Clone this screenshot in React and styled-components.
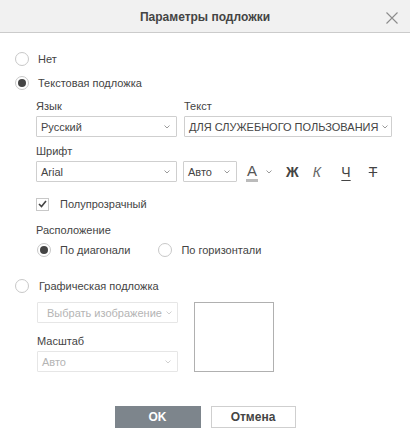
import React from 'react';
import styled, { createGlobalStyle } from 'styled-components';

const GlobalStyle = createGlobalStyle`
  body {
    margin: 0;
    background: #fff;
    font-family: "Liberation Sans", Arial, sans-serif;
    font-size: 11px;
    color: #444;
  }
`;

const Dialog = styled.div`
  width: 410px;
  height: 438px;
  background: #fff;
  display: flex;
  flex-direction: column;
`;

const Header = styled.div`
  position: relative;
  height: 32px;
  border-bottom: 1px solid #cbcbcb;
  background: #f1f1f1;
  display: flex;
  align-items: center;
  justify-content: center;
`;

const Title = styled.div`
  font-size: 12px;
  font-weight: bold;
  color: #444;
  padding-top: 1px;
`;

const Close = styled.div`
  position: absolute;
  right: 12px;
  top: 12px;
  width: 12px;
  height: 12px;
  display: flex;
`;

const Body = styled.div`
  display: flex;
  flex-direction: column;
  padding: 19px 0 0 15px;
`;

const OptionRow = styled.label`
  display: flex;
  align-items: center;
  height: 14px;
  line-height: 14px;
  gap: ${p => p.$gap || 9}px;
  margin-top: ${p => p.$mt || 0}px;
  color: #444;
`;

const Radio = styled.span`
  box-sizing: border-box;
  width: 14px;
  height: 14px;
  border-radius: 50%;
  border: 1px solid #c8c8c8;
  background: #fff;
  display: flex;
  align-items: center;
  justify-content: center;
  flex: none;
  &::after {
    content: '';
    width: 8px;
    height: 8px;
    border-radius: 50%;
    background: ${p => (p.$checked ? '#444' : 'transparent')};
  }
`;

const Section = styled.div`
  display: flex;
  flex-direction: column;
  padding-left: 21px;
  margin-top: ${p => p.$mt || 0}px;
`;

const FieldRow = styled.div`
  display: flex;
  align-items: flex-end;
  gap: ${p => p.$gap || 7}px;
  margin-top: ${p => p.$mt || 0}px;
`;

const Field = styled.div`
  display: flex;
  flex-direction: column;
`;

const Label = styled.div`
  height: 14px;
  line-height: 14px;
  margin-bottom: 3px;
  margin-top: ${p => p.$mt || 0}px;
  color: #444;
`;

const Select = styled.div`
  box-sizing: border-box;
  width: ${p => p.$w}px;
  height: 21px;
  border: 1px solid ${p => (p.$disabled ? '#e6e6e6' : '#cfcfcf')};
  border-radius: 1px;
  background: #fff;
  display: flex;
  align-items: center;
  justify-content: space-between;
  padding: 0 6px 0 ${p => p.$pl || 4}px;
  color: ${p => (p.$disabled ? '#b4b4b4' : '#444')};
  white-space: nowrap;
  overflow: hidden;
`;

const Chevron = ({ color = '#9a9a9a' }) => (
  <svg width="6" height="4" viewBox="0 0 6 4" style={{ flex: 'none', marginLeft: 4 }}>
    <path d="M0.5 0.5 L3 3 L5.5 0.5" fill="none" stroke={color} strokeWidth="1" />
  </svg>
);

const Tools = styled.div`
  display: flex;
  align-items: center;
  height: 21px;
  margin-left: 3px;
`;

const ColorBtn = styled.div`
  display: flex;
  align-items: center;
  gap: 4px;
  margin-right: 14px;
`;

const ColorLetter = styled.span`
  position: relative;
  font-size: 15px;
  line-height: 15px;
  color: #555;
  width: 12px;
  text-align: center;
  padding-bottom: 3px;
  &::after {
    content: '';
    position: absolute;
    left: 0;
    bottom: -1px;
    width: 12px;
    height: 3px;
    background: #bbb;
  }
`;

const StyleBtn = styled.span`
  width: 12px;
  margin-right: ${p => p.$mr || 17}px;
  text-align: center;
  font-size: ${p => p.$size || 14}px;
  line-height: 16px;
  color: ${p => p.$color || '#444'};
  font-weight: ${p => (p.$bold ? 'bold' : 'normal')};
  font-style: ${p => (p.$italic ? 'italic' : 'normal')};
  text-decoration: ${p => p.$deco || 'none'};
  text-underline-offset: 3px;
  text-decoration-thickness: 1px;
`;

const Checkbox = styled.span`
  box-sizing: border-box;
  width: 13px;
  height: 13px;
  border: 1px solid #c8c8c8;
  background: #fff;
  display: flex;
  align-items: center;
  justify-content: center;
  flex: none;
`;

const GraphicArea = styled.div`
  display: flex;
  gap: 16px;
  padding-left: 22px;
  margin-top: 9px;
`;

const Preview = styled.div`
  box-sizing: border-box;
  width: 80px;
  height: 70px;
  border: 1px solid #b0b0b0;
`;

const Footer = styled.div`
  display: flex;
  justify-content: center;
  gap: 10px;
  margin-top: 34px;
`;

const Button = styled.div`
  box-sizing: border-box;
  width: ${p => p.$w || 86}px;
  height: 22px;
  display: flex;
  align-items: center;
  justify-content: center;
  font-weight: bold;
  font-size: 12px;
  border: 1px solid ${p => (p.$primary ? '#7d858c' : '#cfcfcf')};
  background: ${p => (p.$primary ? '#7d858c' : '#fff')};
  color: ${p => (p.$primary ? '#fff' : '#444')};
`;

const App = () => (
  <Dialog>
    <GlobalStyle />
    <Header>
      <Title>Параметры подложки</Title>
      <Close>
        <svg width="12" height="12" viewBox="0 0 12 12">
          <path d="M0.5 0.5 L11.5 11.5 M11.5 0.5 L0.5 11.5" stroke="#8c8c8c" strokeWidth="1.1" fill="none" />
        </svg>
      </Close>
    </Header>
    <Body>
      <OptionRow>
        <Radio />
        Нет
      </OptionRow>
      <OptionRow $mt={10}>
        <Radio $checked />
        Текстовая подложка
      </OptionRow>

      <Section $mt={9}>
        <FieldRow>
          <Field>
            <Label>Язык</Label>
            <Select $w={141}>
              Русский
              <Chevron />
            </Select>
          </Field>
          <Field>
            <Label>Текст</Label>
            <Select $w={208} $pl={4}>
              ДЛЯ СЛУЖЕБНОГО ПОЛЬЗОВАНИЯ
              <Chevron />
            </Select>
          </Field>
        </FieldRow>
        <FieldRow $mt={7} $gap={6}>
          <Field>
            <Label>Шрифт</Label>
            <Select $w={141}>
              Arial
              <Chevron />
            </Select>
          </Field>
          <Select $w={54}>
            Авто
            <Chevron />
          </Select>
          <Tools>
            <ColorBtn>
              <ColorLetter>A</ColorLetter>
              <Chevron />
            </ColorBtn>
            <StyleBtn $bold $mr={13}>Ж</StyleBtn>
            <StyleBtn $italic $color="#666" $mr={17}>К</StyleBtn>
            <StyleBtn $deco="underline" $mr={15}>Ч</StyleBtn>
            <StyleBtn $deco="line-through">Т</StyleBtn>
          </Tools>
        </FieldRow>

        <OptionRow $mt={15} $gap={11}>
          <Checkbox>
            <svg width="9" height="8" viewBox="0 0 9 8">
              <path d="M1 4 L3.5 6.5 L8 1" stroke="#444" strokeWidth="1.6" fill="none" />
            </svg>
          </Checkbox>
          Полупрозрачный
        </OptionRow>

        <Label $mt={12}>Расположение</Label>
        <FieldRow $mt={3} $gap={0}>
          <OptionRow $gap={9}>
            <Radio $checked style={{ marginLeft: 1 }} />
            По диагонали
          </OptionRow>
          <OptionRow $gap={9} style={{ marginLeft: 21 }}>
            <Radio />
            По горизонтали
          </OptionRow>
        </FieldRow>
      </Section>

      <OptionRow $mt={22} $gap={10}>
        <Radio />
        Графическая подложка
      </OptionRow>

      <GraphicArea>
        <Field>
          <Select $w={141} $disabled $pl={9}>
            Выбрать изображение
            <Chevron color="#d0d0d0" />
          </Select>
          <Label $mt={11}>Масштаб</Label>
          <Select $w={141} $disabled>
            Авто
            <Chevron color="#d0d0d0" />
          </Select>
        </Field>
        <Preview />
      </GraphicArea>
    </Body>
    <Footer>
      <Button $primary $w={86}>OK</Button>
      <Button $w={85}>Отмена</Button>
    </Footer>
  </Dialog>
);

export default App;
